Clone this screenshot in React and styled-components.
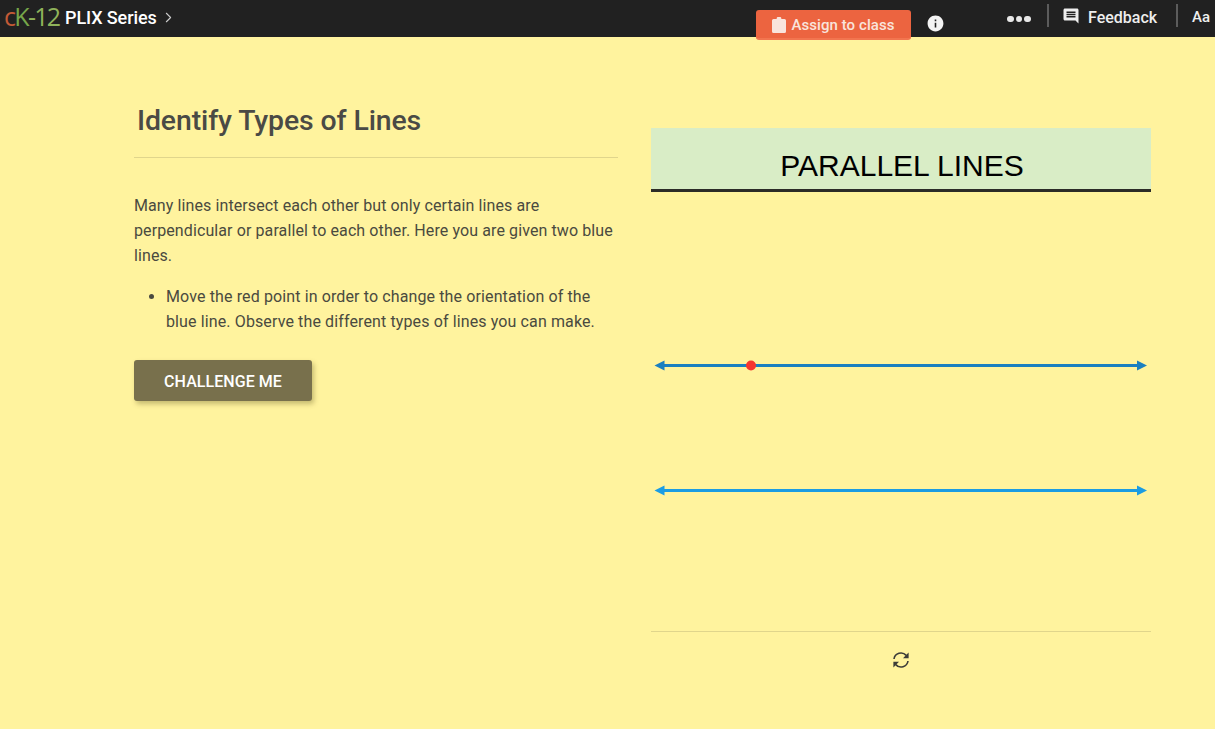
import React from "react";
import styled, { createGlobalStyle } from "styled-components";
import { ChevronRight } from "lucide-react";
import { MdInfo, MdMessage } from "react-icons/md";

const Global = createGlobalStyle`
  html, body { margin: 0; padding: 0; background: #fff; }
  body { font-family: Roboto, "Liberation Sans", sans-serif; overflow: hidden; }
`;
const Page = styled.div`
  width: 1215px; height: 729px; background: #fff39e; display: flex; flex-direction: column;
`;
const Header = styled.header`
  height: 37px; flex: none; background: #212121; color: #fff; display: flex; align-items: flex-start;
`;
const Logo = styled.div`
  width: 61px; margin: 3px 0 0 4px; font: 400 25px/26px "Open Sans", sans-serif; letter-spacing: -1.7px; color: #8fb35a; white-space: nowrap;
`;
const LogoC = styled.span` color: #c25a36; `;
const LogoK = styled.span` color: #76a64a; `;
const Crumb = styled.div`
  display: flex; align-items: center; height: 34px; font-weight: 500; font-size: 18px; letter-spacing: -0.1px; color: #fff; width: 691px;
  svg { color: #ccc; margin-left: 3px; }
`;
const AssignButton = styled.button`
  position: relative; z-index: 1; width: 155px; height: 30px; margin: 10px 0 0; flex: none; border: 0; border-bottom: 2px solid #f2754f; border-radius: 3px;
  background: #ec6440; color: #f9e4dc; font: 500 15px Roboto, sans-serif; letter-spacing: 0.07px; display: flex; align-items: center; justify-content: center; gap: 5px; padding: 2px 0 0;
`;
const InfoButton = styled.div`
  margin: 14px 0 0 15px; height: 18px; color: #f4f4f4; display: flex; width: 81px; flex: none;
`;
const Dots = styled.div`
  margin-top: 15px; width: 24px; display: flex; gap: 2px; height: 8px; align-items: center; flex: none;
`;
const Dot = styled.i`
  width: 6.5px; height: 6.5px; border-radius: 50%; background: #e8e8e8; display: block;
`;
const Divider = styled.div`
  width: 2px; height: 23px; margin: 4px 0 0 ${p => p.$left}px; background: #5c5c5c; flex: none;
`;
const Feedback = styled.div`
  margin: 5px 0 0 13px; display: flex; align-items: center; gap: 8px; font-weight: 500; font-size: 16px; color: #eee; height: 24px; width: 110px; flex: none;
  svg { transform: scaleX(-1); margin-top: -2px; }
`;
const Aa = styled.div`
  margin: 7px 0 0 14px; font-weight: 500; font-size: 15px; line-height: 20px; color: #eee;
`;
const Main = styled.main`
  flex: 1; display: grid; grid-template-columns: 484px 500px; column-gap: 33px; padding-left: 134px;
`;
const Left = styled.section`
  padding-top: 66px;
`;
const Title = styled.h1`
  margin: 0 0 0 3px; font: 500 28.4px/36px Roboto, sans-serif; color: #4a4a45; letter-spacing: -0.1px;
`;
const Rule = styled.hr`
  margin: ${p => p.$top}px 0 0; border: 0; border-top: 1px solid #e0d58c;
`;
const Para = styled.p`
  margin: 35px 0 0; font-size: 16px; line-height: 25px; color: #4a4a40; letter-spacing: 0.1px;
`;
const List = styled.ul`
  margin: 16px 0 0; padding: 0 10px 0 32px; font-size: 16px; line-height: 25px; color: #4a4a40; letter-spacing: 0.12px;
`;
const ChallengeButton = styled.button`
  margin-top: 26px; width: 178px; height: 41px; border: 0; border-radius: 3px; background: #78704c; color: #fff; padding: 2px 0 0;
  font: 500 16px Roboto, sans-serif; letter-spacing: 0.05px; box-shadow: 2px 3px 5px rgba(90,80,30,.35); display: block;
`;
const Right = styled.section`
  padding-top: 91px; display: flex; flex-direction: column;
`;
const Banner = styled.div`
  background: #d9edc6; border-bottom: 3px solid #2c2c28; display: flex; align-items: flex-end; justify-content: center;
  font: 400 30px/34px "Liberation Sans", Arial, sans-serif; color: #000; padding: 0 0 6px 2px; height: 55px;
`;
const Stage = styled.svg`
  display: block; width: 500px; height: 439px; flex: none;
`;
const Tools = styled.div`
  border-top: 1px solid #e0d58c; display: flex; justify-content: center; padding: 19px 1px 0 0; color: #3c3c38;
`;

const Line = ({ y, color }) => (
  <g fill={color}>
    <rect x="10" y={y - 1.5} width="480" height="3" />
    <path d={`M3.5 ${y}L13.5 ${y - 5}V${y + 5}Z`} />
    <path d={`M496 ${y}L486 ${y - 5}V${y + 5}Z`} />
  </g>
);

const Clipboard = () => (
  <svg width="14" height="16" viewBox="0 0 14 16" fill="currentColor">
    <path d="M1.5 2H4.6a2.4 2.4 0 0 1 4.8 0H12.5A1.5 1.5 0 0 1 14 3.5V14.5A1.5 1.5 0 0 1 12.5 16H1.5A1.5 1.5 0 0 1 0 14.5V3.5A1.5 1.5 0 0 1 1.5 2Z" />
  </svg>
);

export default function App() {
  return (
    <Page>
      <Global />
      <Header>
        <Logo><LogoC>c</LogoC><LogoK>K</LogoK>-12</Logo>
        <Crumb>PLIX Series<ChevronRight size={17} strokeWidth={1.5} /></Crumb>
        <AssignButton><Clipboard />Assign to class</AssignButton>
        <InfoButton><MdInfo size={19} /></InfoButton>
        <Dots><Dot /><Dot /><Dot /></Dots>
        <Divider $left={16} />
        <Feedback><MdMessage size={18} />Feedback</Feedback>
        <Divider $left={4} />
        <Aa>Aa</Aa>
      </Header>
      <Main>
        <Left>
          <Title>Identify Types of Lines</Title>
          <Rule $top={18} />
          <Para>Many lines intersect each other but only certain lines are perpendicular or parallel to each other. Here you are given two blue lines.</Para>
          <List><li>Move the red point in order to change the orientation of the blue line. Observe the different types of lines you can make.</li></List>
          <ChallengeButton>CHALLENGE ME</ChallengeButton>
        </Left>
        <Right>
          <Banner>PARALLEL LINES</Banner>
          <Stage viewBox="0 0 500 439">
            <Line y={173.5} color="#1a7fc0" />
            <circle cx="100" cy="173.5" r="5" fill="#f6352e" />
            <Line y={298.5} color="#1b9ce3" />
          </Stage>
          <Tools>
            <svg width="18" height="18" viewBox="0 0 18 18" fill="none" stroke="currentColor" strokeWidth="1.6">
              <path d="M2 8a7 7 0 0 1 12.2-3.6" />
              <path d="M16 10a7 7 0 0 1-12.2 3.6" />
              <path d="M16.6 1.6v5.6H11z" fill="currentColor" stroke="none" />
              <path d="M1.4 16.4v-5.6H7z" fill="currentColor" stroke="none" />
            </svg>
          </Tools>
        </Right>
      </Main>
    </Page>
  );
}
